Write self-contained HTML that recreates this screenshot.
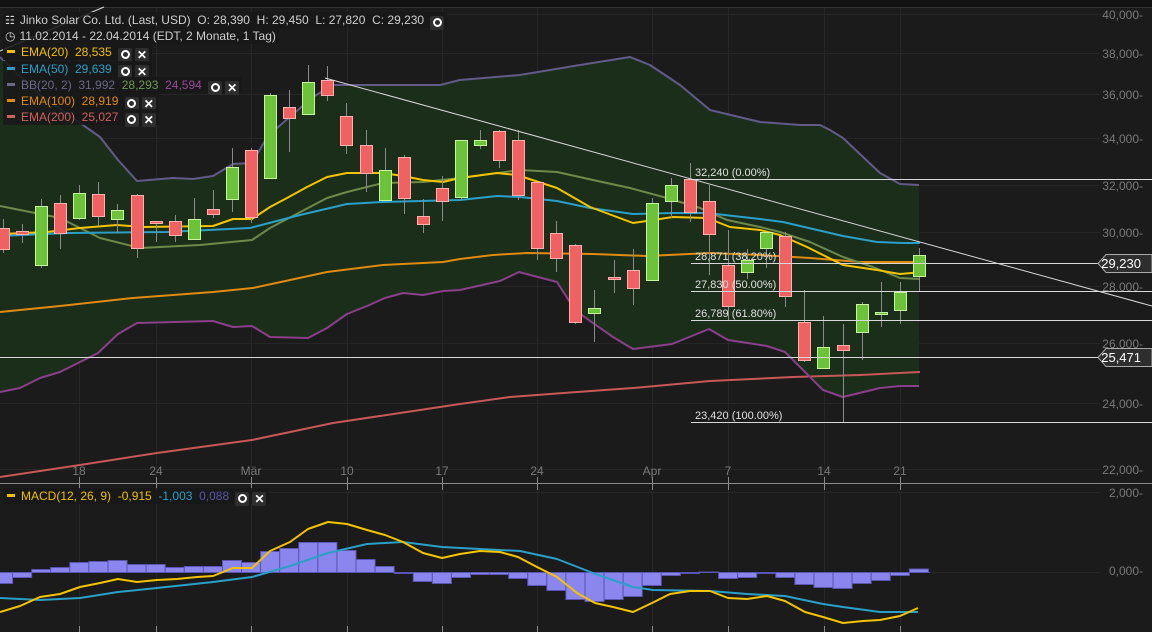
<!DOCTYPE html>
<html><head><meta charset="utf-8"><style>
html,body{margin:0;padding:0;background:#1c1b1b;}
body{width:1152px;height:632px;overflow:hidden;position:relative;font-family:"Liberation Sans",Arial,sans-serif;}
svg{position:absolute;left:0;top:0;}
.lg{position:absolute;left:3px;font-size:12px;white-space:nowrap;height:16px;line-height:16px;background:rgba(24,24,24,0.85);padding:0 3px 0 2px;}
.b{display:inline-block;width:14px;height:14px;background:#2e2e2e;border-radius:2px;vertical-align:-3px;margin-left:3px;text-align:center;color:#fff;font-weight:bold;font-size:12px;line-height:14px;}
.o::before{content:"";display:inline-block;width:5px;height:5px;border:2px solid #fff;border-radius:50%;margin-top:2.5px;}
.d{display:inline-block;width:8px;height:3px;vertical-align:3px;margin:0 6px 0 2px;}
</style></head><body>
<svg id="s" width="1152" height="632" xmlns="http://www.w3.org/2000/svg">
<rect x="0" y="0" width="1152" height="7" fill="#121212"/>
<line x1="0" y1="7.5" x2="1152" y2="7.5" stroke="#333"/>
<g id="grid" stroke="#262626" stroke-width="1"></g>
<path id="band" fill="#1b2e19"/>
<g id="lines" fill="none" stroke-width="2" stroke-linejoin="round"></g>
<g id="candles"></g>
<g stroke="#d8d8d8" stroke-width="1">
<line x1="0" y1="51" x2="104" y2="7"/>
<line x1="325" y1="78" x2="1152" y2="306"/>
<line x1="691" y1="179.5" x2="1152" y2="179.5"/>
<line x1="691" y1="263.5" x2="1152" y2="263.5"/>
<line x1="691" y1="291.5" x2="1152" y2="291.5"/>
<line x1="691" y1="320.5" x2="1152" y2="320.5"/>
<line x1="0" y1="357.5" x2="1152" y2="357.5"/>
<line x1="691" y1="422.5" x2="1152" y2="422.5"/>
</g>
<g font-size="11" fill="#e0e0e0" font-family="Liberation Sans,Arial,sans-serif">
<text x="695" y="176">32,240 (0.00%)</text>
<text x="695" y="260">28,871 (38.20%)</text>
<text x="695" y="288">27,830 (50.00%)</text>
<text x="695" y="317">26,789 (61.80%)</text>
<text x="695" y="419">23,420 (100.00%)</text>
</g>
<g font-size="12" fill="#7a7a7a" text-anchor="end" font-family="Liberation Sans,Arial,sans-serif">
<text x="1143" y="19">40,000-</text><text x="1143" y="58">38,000-</text><text x="1143" y="99">36,000-</text>
<text x="1143" y="143">34,000-</text><text x="1143" y="190">32,000-</text><text x="1143" y="237">30,000-</text>
<text x="1143" y="291">28,000-</text><text x="1143" y="348">26,000-</text><text x="1143" y="408">24,000-</text>
<text x="1143" y="474">22,000-</text><text x="1143" y="497">2,000-</text><text x="1143" y="575">0,000-</text>
</g>
<g>
<path d="M1098,263.5 l8,-9 h46 v18 h-46z" fill="#2e2e2e" stroke="#aaa"/>
<text x="1141" y="268" fill="#fff" font-size="13" text-anchor="end" font-family="Liberation Sans,Arial,sans-serif">29,230</text>
<path d="M1098,357.5 l8,-9 h46 v18 h-46z" fill="#2e2e2e" stroke="#aaa"/>
<text x="1141" y="362" fill="#fff" font-size="13" text-anchor="end" font-family="Liberation Sans,Arial,sans-serif">25,471</text>
</g>
<line x1="0" y1="483.5" x2="1152" y2="483.5" stroke="#8a8a8a"/>
<g id="ticks" stroke="#8a8a8a"></g>
<g font-size="12" fill="#7a7a7a" text-anchor="middle" font-family="Liberation Sans,Arial,sans-serif">
<text x="79" y="475">18</text><text x="156" y="475">24</text><text x="251" y="475">Mär</text>
<text x="347" y="475">10</text><text x="442" y="475">17</text><text x="537" y="475">24</text>
<text x="652" y="475">Apr</text><text x="728" y="475">7</text><text x="824" y="475">14</text><text x="900" y="475">21</text>
</g>
<line x1="0" y1="572.5" x2="930" y2="572.5" stroke="#5a55b0"/>
<g id="hist" fill="#8a86ee" stroke="#5a55b0" stroke-width="1"></g>
<g id="macd" fill="none" stroke-width="2" stroke-linejoin="round"></g>
</svg>

<div class="lg" style="top:12px;color:#cfcfcf"><span style="color:#ddd;font-size:11px;margin-right:5px">&#9783;</span>Jinko Solar Co. Ltd. (Last, USD)&nbsp; O: 28,390&nbsp; H: 29,450&nbsp; L: 27,820&nbsp; C: 29,230 <span class="b o"></span></div>
<div class="lg" style="top:28px;color:#cfcfcf"><span style="margin-right:4px">&#9719;</span>11.02.2014 - 22.04.2014 (EDT, 2 Monate, 1 Tag)</div>
<div class="lg" style="top:44px;color:#f0c000"><span class="d" style="background:#f0c000"></span>EMA(20)&nbsp; 28,535 <span class="b o"></span><span class="b">&#10005;</span></div>
<div class="lg" style="top:61px;color:#2aa0c8"><span class="d" style="background:#2aa0c8"></span>EMA(50)&nbsp; 29,639 <span class="b o"></span><span class="b">&#10005;</span></div>
<div class="lg" style="top:77px;color:#6a6888"><span class="d" style="background:#6a6888"></span>BB(20, 2)&nbsp; 31,992&nbsp; <span style="color:#6e9a50">28,293</span>&nbsp; <span style="color:#9a4a9a">24,594</span> <span class="b o"></span><span class="b">&#10005;</span></div>
<div class="lg" style="top:93px;color:#e08a10"><span class="d" style="background:#e08a10"></span>EMA(100)&nbsp; 28,919 <span class="b o"></span><span class="b">&#10005;</span></div>
<div class="lg" style="top:109px;color:#d06060"><span class="d" style="background:#d06060"></span>EMA(200)&nbsp; 25,027 <span class="b o"></span><span class="b">&#10005;</span></div>
<div class="lg" style="top:488px;color:#f0c000"><span class="d" style="background:#f0c000"></span>MACD(12, 26, 9)&nbsp; -0,915&nbsp; <span style="color:#2aa0c8">-1,003</span>&nbsp; <span style="color:#5a55a8">0,088</span> <span class="b o"></span><span class="b">&#10005;</span></div>

<script>
var NS="http://www.w3.org/2000/svg";
function el(p,t,a){var e=document.createElementNS(NS,t);for(var k in a)e.setAttribute(k,a[k]);document.getElementById(p).appendChild(e);return e;}
function pts(a){var s=[];for(var i=0;i<a.length;i+=2)s.push(a[i]+","+a[i+1]);return s.join(" ");}
[79,156,251,347,442,537,652,728,824,900].forEach(function(x){el("grid","line",{x1:x+.5,y1:8,x2:x+.5,y2:632});el("ticks","line",{x1:x+.5,y1:477,x2:x+.5,y2:483});el("ticks","line",{x1:x+.5,y1:484,x2:x+.5,y2:490});el("ticks","line",{x1:x+.5,y1:626,x2:x+.5,y2:632});});
[14,53,94,138,185,232,286,343,403,469,492,572].forEach(function(y){el("grid","line",{x1:0,y1:y+.5,x2:1100,y2:y+.5});});
var up=[0,57,40,95,90,130,100,137,118,160,137,181,173,178,193,179,213,176,233,164,252,163,270,132,277,128,313,97,333,85,440,85,460,80,520,75,580,65,630,57,650,65,680,85,710,110,760,122,800,125,820,125,830,130,843,138,880,173,900,184,919,185];
var lo=[0,392,20,388,40,378,60,372,80,362,98,353,118,334,137,323,213,321,233,327,252,326,270,337,308,338,327,328,347,314,367,306,385,298,403,293,423,295,443,291,460,290,500,281,519,272,557,282,575,310,593,323,613,337,633,349,672,344,709,329,728,340,767,346,785,352,823,390,843,397,880,388,900,386,919,386];
var d="M"+pts(up);var r=[];for(var i=lo.length-2;i>=0;i-=2)r.push(lo[i]+","+lo[i+1]);d+=" L"+r.join(" ")+" Z";
document.getElementById("band").setAttribute("d",d);
var L=[
["#c85858",[0,477,80,465,157,453,252,440,333,423,400,413,460,404,510,397,577,392,633,388,710,381,793,377,860,375,920,372]],
["#e08a10",[0,312,60,306,133,298,213,292,253,288,290,280,327,272,383,265,443,262,460,259,493,255,527,253,593,254,647,256,710,253,760,255,810,258,860,262,920,262]],
["#8a3f8a",lo],["#625a88",up],
["#6e8a4a",[0,206,60,218,100,238,140,248,200,245,252,240,270,228,327,198,347,192,383,183,423,182,460,178,520,170,557,172,593,180,630,188,667,198,700,208,727,220,760,227,780,232,810,242,843,257,873,267,900,278,920,279]],
["#2aa0c8",[0,236,67,233,167,232,250,228,300,215,347,204,383,202,460,200,497,196,520,197,557,201,590,208,633,214,673,213,707,213,760,219,783,222,843,236,877,242,903,243,920,243]],
["#f5c400",[0,234,47,232,80,228,117,225,143,227,213,226,233,219,252,219,270,207,287,198,307,187,327,177,347,173,383,173,403,176,423,180,443,182,460,178,497,173,517,175,557,188,590,207,633,223,673,217,707,218,730,227,760,230,780,235,807,247,843,265,877,270,900,274,923,272]]];
L.forEach(function(l){el("lines","polyline",{points:pts(l[1]),stroke:l[0]});});
var C=[[228,249,219,253,0],[231,234,224,243,0],[206,265,199,268,1],[203,233,195,249,0],[193,218,185,220,1],[194,216,182,226,0],[210,219,204,233,1],[195,248,194,258,0],[221,223,221,242,0],[221,235,215,242,0],[219,239,198,240,1],[209,214,190,218,0],[167,199,148,212,1],[150,217,148,223,0],[95,178,93,179,1],[107,118,90,152,0],[82,114,65,115,1],[80,95,66,101,0],[116,145,103,154,0],[145,173,130,192,0],[170,200,148,200,1],[157,198,155,214,0],[216,224,199,233,0],[188,201,176,221,0],[140,197,140,200,1],[140,145,130,149,1],[131,160,130,168,0],[140,195,130,200,0],[182,248,182,260,0],[233,258,221,272,0],[245,322,244,324,0],[308,313,290,342,1],[277,279,260,293,0],[270,288,249,305,0],[203,280,198,280,1],[185,201,178,218,1],[179,212,163,222,0],[201,234,185,275,0],[265,306,230,320,0],[260,272,249,279,1],[232,248,232,268,1],[236,296,232,307,0],[322,360,290,362,0],[347,368,316,368,1],[345,350,324,422,0],[304,332,302,360,1],[312,314,282,327,1],[292,310,282,324,1],[255,276,248,291,1]];
C.forEach(function(c,i){var x=Math.round(3+19.08*i);el("candles","line",{x1:x+.5,y1:c[2],x2:x+.5,y2:c[3],stroke:"#8a8a8a"});
el("candles","rect",{x:x-5.5,y:c[0]+.5,width:12,height:Math.max(1,c[1]-c[0]),fill:c[4]?"#6cc33a":"#f06262",stroke:c[4]?"#c6f59c":"#ffb0b0"});});
var H=[-11,-5,3,5,10,11,12,8,8,5,6,6,12,10,21,24,30,30,22,13,6,-1,-9,-11,-5,-2,-2,-6,-13,-18,-27,-29,-27,-24,-13,-3,-1,0.5,-6,-5,-1,-5,-12,-15,-16,-11,-8,-3,3.5];
H.forEach(function(h,i){var x=3+19.08*i-9.5;var y=h>0?572.5-h:572.5;el("hist","rect",{x:x,y:y,width:19.08,height:Math.abs(h)});});
el("macd","polyline",{stroke:"#2aa0c8",points:pts([0,598,40,600,80,598,118,592,157,588,213,582,252,577,290,566,328,553,367,544,403,542,442,547,480,549,520,551,557,559,593,573,633,587,653,590,710,591,747,594,785,596,823,604,843,607,880,612,918,612])});
el("macd","polyline",{stroke:"#f5c400",points:pts([0,612,20,606,40,597,60,594,80,587,100,583,118,579,137,582,157,580,177,579,197,577,213,576,233,568,252,568,270,551,290,542,308,529,328,522,347,524,367,530,385,535,403,542,423,553,442,558,460,554,480,551,500,552,518,557,537,567,557,577,577,593,595,603,613,607,633,612,652,603,670,594,690,591,710,591,728,598,747,599,767,596,785,601,805,612,823,617,843,623,863,621,880,620,900,616,918,608])});
</script>
</body></html>
